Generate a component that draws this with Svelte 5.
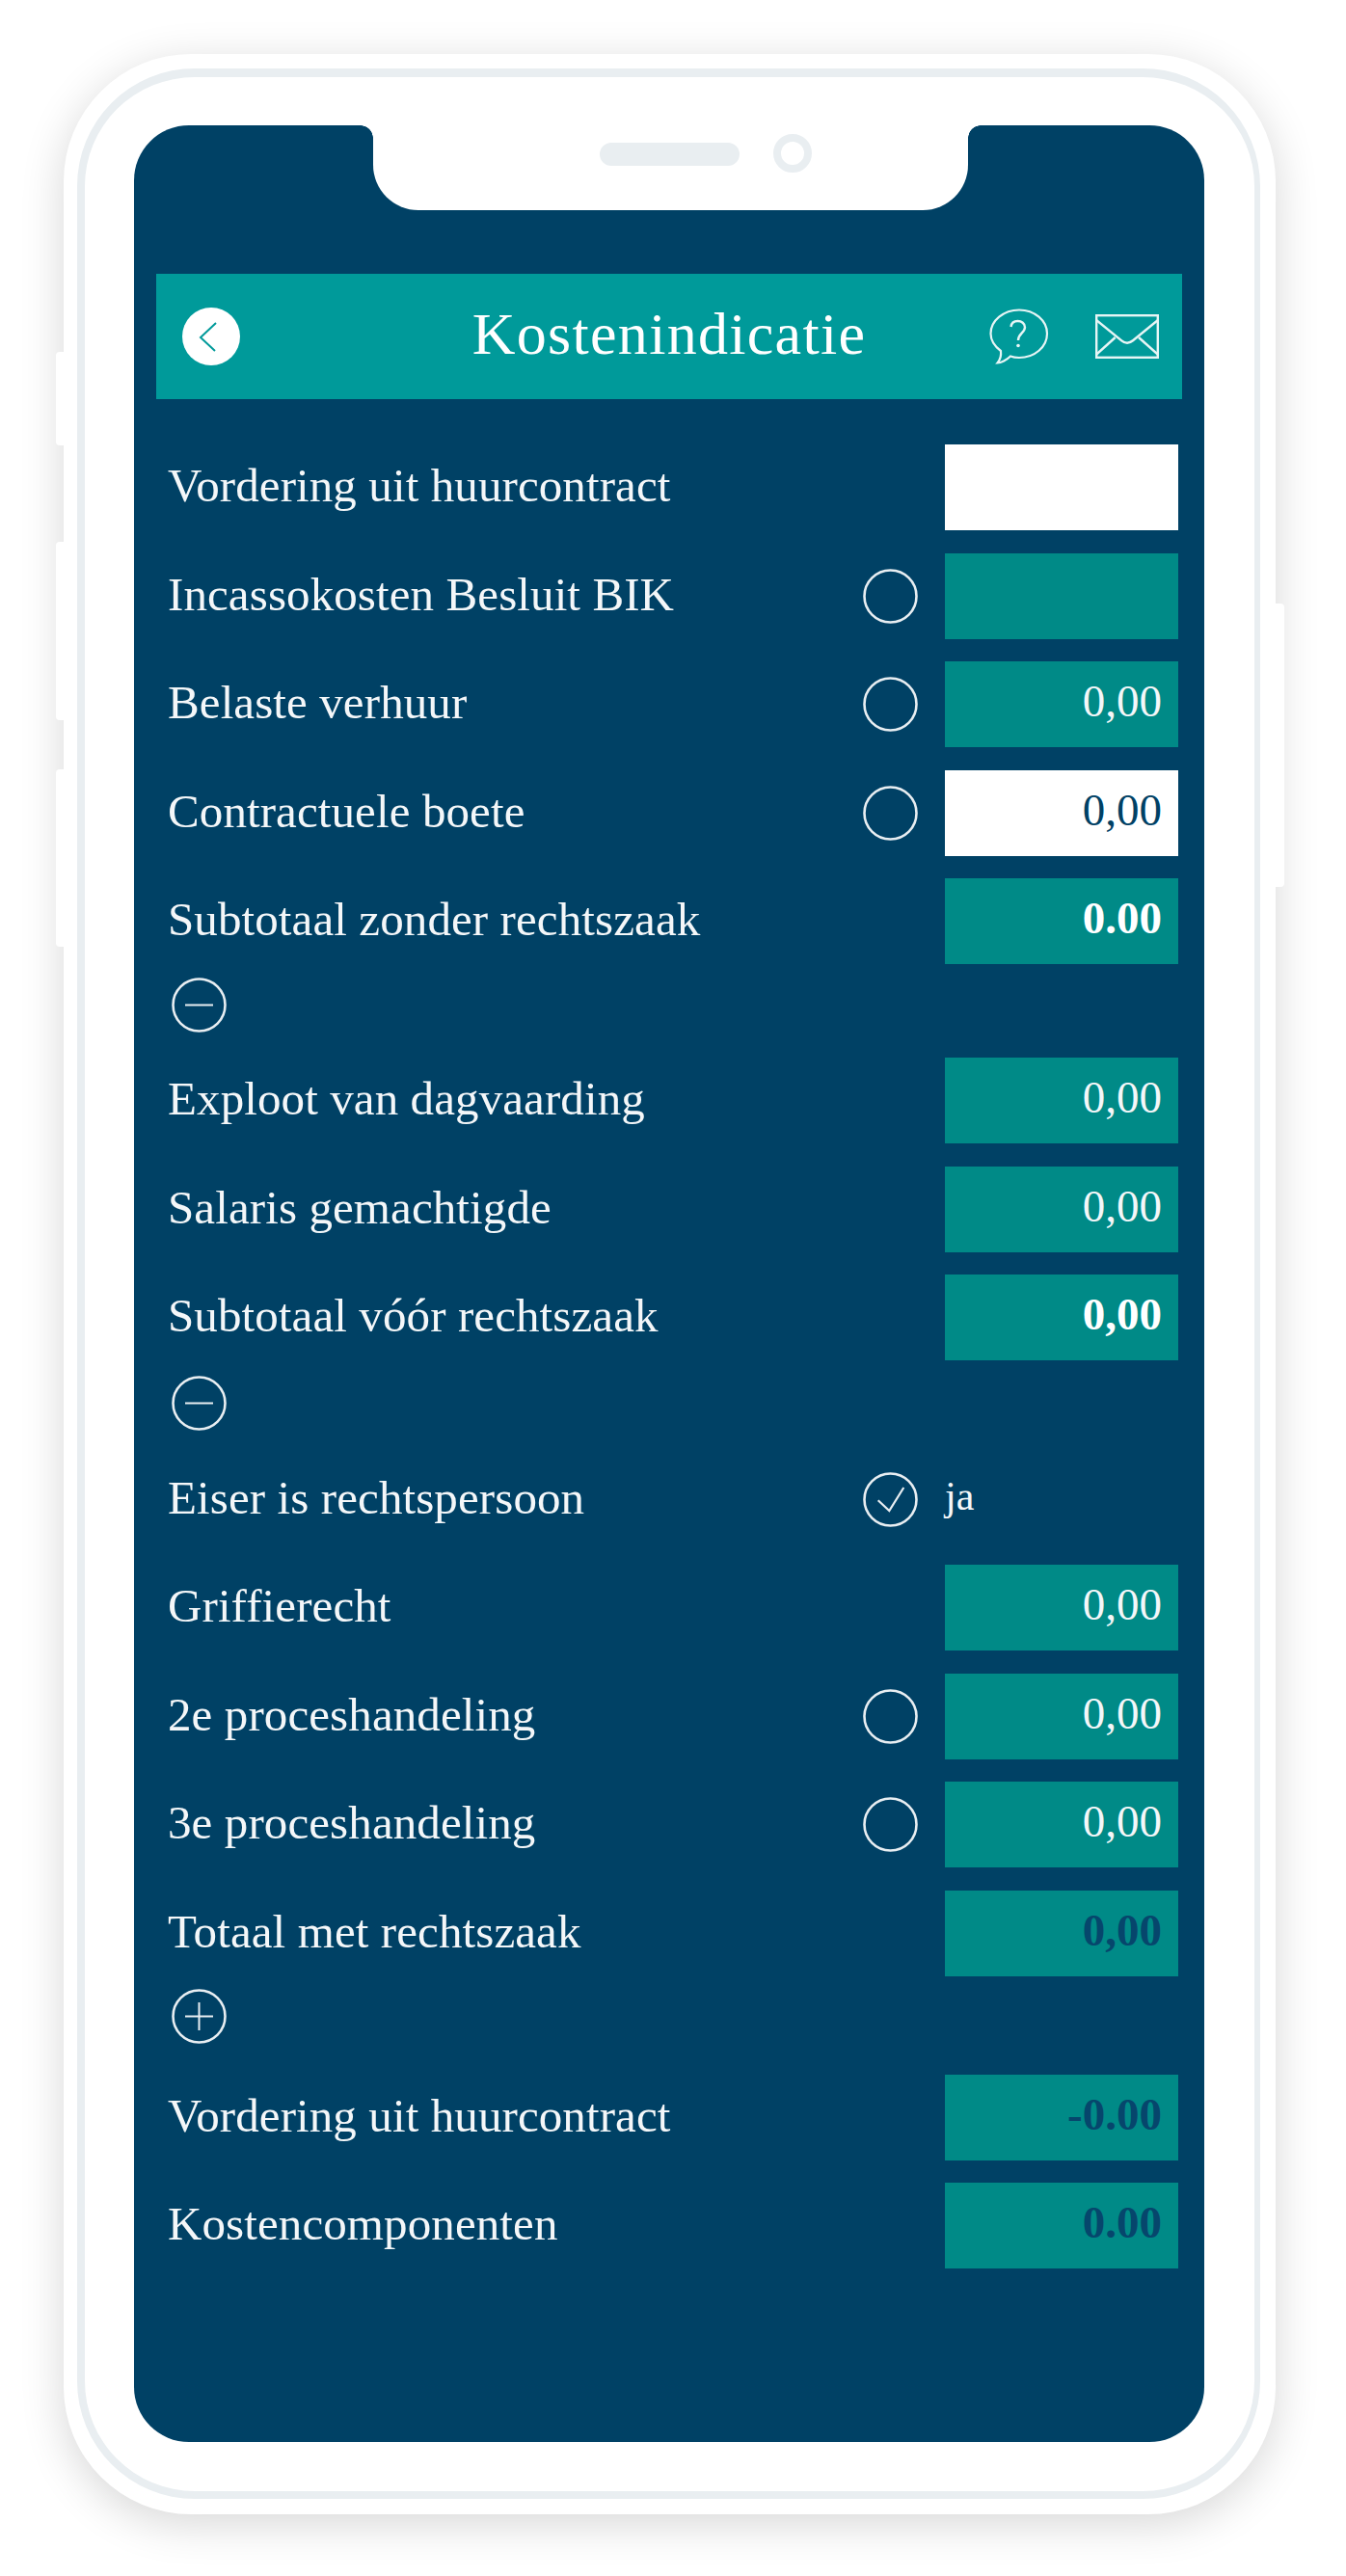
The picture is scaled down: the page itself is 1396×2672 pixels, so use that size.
<script lang="ts">
	type Row = {
		label: string;
		radio?: boolean;
		checked?: boolean;
		value?: string;
		kind?: 'plain' | 'input' | 'bold' | 'dark';
		note?: string;
	};

	const groups: { rows: Row[]; toggle?: 'minus' | 'plus'; cls?: string }[] = [
		{
			rows: [
				{ label: 'Vordering uit huurcontract', value: '', kind: 'input' },
				{ label: 'Incassokosten Besluit BIK', radio: true, value: '' },
				{ label: 'Belaste verhuur', radio: true, value: '0,00' },
				{ label: 'Contractuele boete', radio: true, value: '0,00', kind: 'input' },
				{ label: 'Subtotaal zonder rechtszaak', value: '0.00', kind: 'bold' }
			],
			toggle: 'minus'
		},
		{
			rows: [
				{ label: 'Exploot van dagvaarding', value: '0,00' },
				{ label: 'Salaris gemachtigde', value: '0,00' },
				{ label: 'Subtotaal vóór rechtszaak', value: '0,00', kind: 'bold' }
			],
			toggle: 'minus',
			cls: 'second'
		},
		{
			rows: [
				{ label: 'Eiser is rechtspersoon', radio: true, checked: true, note: 'ja' },
				{ label: 'Griffierecht', value: '0,00' },
				{ label: '2e proceshandeling', radio: true, value: '0,00' },
				{ label: '3e proceshandeling', radio: true, value: '0,00' },
				{ label: 'Totaal met rechtszaak', value: '0,00', kind: 'dark' }
			],
			toggle: 'plus',
			cls: 'third'
		},
		{
			rows: [
				{ label: 'Vordering uit huurcontract', value: '-0.00', kind: 'dark' },
				{ label: 'Kostencomponenten', value: '0.00', kind: 'dark' }
			]
		}
	];
</script>

<div class="page">
	<div class="phone">
		<span class="side side-a"></span>
		<span class="side side-b"></span>
		<span class="side side-c"></span>
		<span class="side side-d"></span>
		<div class="bezel">
			<div class="screen">
				<div class="notch">
					<span class="speaker"></span>
					<span class="camera"></span>
				</div>

				<header class="bar">
					<div class="bar-left">
						<svg class="back" viewBox="0 0 60 60" width="60" height="60">
							<circle cx="30" cy="30" r="30" fill="#fff" />
							<path d="M35 16 L19 31 L34 45" fill="none" stroke="#009a9a" stroke-width="2" />
						</svg>
					</div>
					<h1>Kostenindicatie</h1>
					<div class="bar-right">
						<svg viewBox="0 0 62 58" width="62" height="58" fill="none" stroke="#e6f5f5" stroke-width="2.2">
							<path d="M31 1.5 C47 1.5 60 12.5 60 26 C60 40 47 51 31 51 C27.5 51 24.5 50.5 22 49.5 C18 53.5 12 56.5 8.5 56.5 C11.5 53 12.5 48.5 12 44 C6 39.5 1.5 33 1.5 26 C1.5 12.5 15 1.5 31 1.5 Z" />
							<path d="M22.5 19 C23 15 26 13 29.5 13 C33.5 13 37 15.5 37 19.5 C37 25 30 26 30 33" stroke-width="2.4" />
							<circle cx="30" cy="38.5" r="1.8" fill="#e6f5f5" stroke="none" />
						</svg>
						<svg viewBox="0 0 66 46" width="66" height="46" fill="none" stroke="#e6f5f5" stroke-width="2.4">
							<rect x="1.2" y="1.2" width="63.6" height="43.6" />
							<path d="M0.7 5.7 L27.3 27.3 C31 30.5 35 30.5 39 27.3 L65.3 5.7" />
							<path d="M0.7 42 L20.7 24" />
							<path d="M65.3 42 L45 24" />
						</svg>
					</div>
				</header>

				<main class="list">
					{#each groups as g}
						{#each g.rows as r}
							<div class="row">
								<span class="label">{r.label}</span>
								<span class="slot">
									{#if r.radio}
										<svg viewBox="0 0 57 57" width="57" height="57" fill="none" stroke="#e8eef2" stroke-width="2.6">
											<circle cx="28.5" cy="28.5" r="27" />
											{#if r.checked}
												<path d="M15.7 29.3 L27.3 40 L42.3 16" stroke-width="2.2" />
											{/if}
										</svg>
									{/if}
								</span>
								{#if r.note}
									<span class="note">{r.note}</span>
								{:else}
									<span class="field {r.kind ?? 'plain'}">{r.value}</span>
								{/if}
							</div>
						{/each}
						{#if g.toggle}
							<div class="toggle {g.cls ?? ''}">
								<svg viewBox="0 0 57 57" width="57" height="57" fill="none" stroke="#e8eef2" stroke-width="2.6">
									<circle cx="28.5" cy="28.5" r="27" />
									<path d="M14 28.5 H43" stroke-width="2" />
									{#if g.toggle === 'plus'}
										<path d="M28.5 14 V43" stroke-width="2" />
									{/if}
								</svg>
							</div>
						{/if}
					{/each}
				</main>
			</div>
		</div>
	</div>
</div>

<style>
	:global(body) {
		background: #fff;
	}

	.page {
		width: 1396px;
		height: 2672px;
		padding: 56px 73px 0 66px;
		box-sizing: border-box;
		overflow: hidden;
		font-family: 'Liberation Serif', 'Times New Roman', serif;
	}

	.phone {
		position: relative;
		height: 2552px;
		padding: 15px 16px 16px 14px;
		box-sizing: border-box;
		background: #fff;
		border-radius: 132px;
		box-shadow: 0 10px 46px rgba(0, 0, 0, 0.16);
	}

	.side {
		position: absolute;
		width: 11px;
		background: #fff;
	}

	.side-a {
		left: -8px;
		top: 309px;
		height: 97px;
		border-radius: 4px 0 0 4px;
	}

	.side-b {
		left: -8px;
		top: 506px;
		height: 185px;
		border-radius: 4px 0 0 4px;
	}

	.side-c {
		left: -8px;
		top: 742px;
		height: 184px;
		border-radius: 4px 0 0 4px;
	}

	.side-d {
		right: -9px;
		top: 570px;
		height: 294px;
		border-radius: 0 4px 4px 0;
	}

	.bezel {
		height: 100%;
		box-sizing: border-box;
		padding: 50px 52px 51px 51px;
		background: #fff;
		border-style: solid;
		border-color: #e9eef1;
		border-width: 9px 6px 8px 8px;
		border-radius: 122px;
	}

	.screen {
		position: relative;
		height: 100%;
		padding: 154px 23px 0;
		box-sizing: border-box;
		background: #004165;
		border-radius: 57px;
		overflow: hidden;
	}

	.notch {
		position: absolute;
		top: 0;
		left: 248px;
		width: 617px;
		height: 88px;
		background: #fff;
		border-radius: 0 0 47px 47px;
	}

	.notch::before,
	.notch::after {
		content: '';
		position: absolute;
		top: 0;
		width: 13px;
		height: 13px;
	}

	.notch::before {
		left: -13px;
		background: radial-gradient(circle at 0 100%, transparent 12.5px, #fff 13px);
	}

	.notch::after {
		right: -13px;
		background: radial-gradient(circle at 100% 100%, transparent 12.5px, #fff 13px);
	}

	.speaker {
		position: absolute;
		left: 235px;
		top: 18px;
		width: 145px;
		height: 24px;
		border-radius: 12px;
		background: #e9eef1;
	}

	.camera {
		position: absolute;
		left: 415px;
		top: 9px;
		width: 24px;
		height: 24px;
		border: 8.5px solid #e9eef1;
		border-radius: 50%;
	}

	.bar {
		display: grid;
		grid-template-columns: 1fr auto 1fr;
		align-items: center;
		height: 130px;
		background: #009a9a;
		color: #fff;
	}

	.bar-left {
		display: flex;
		padding-left: 27px;
	}

	.bar h1 {
		margin: 0;
		padding-bottom: 6px;
		font-size: 62px;
		font-weight: 400;
		letter-spacing: 1.3px;
		line-height: 1;
	}

	.bar-right {
		display: flex;
		justify-content: flex-end;
		align-items: center;
		gap: 48px;
		padding-right: 24px;
	}

	.list {
		display: flex;
		flex-direction: column;
		margin-top: 47px;
		padding: 0 4px 0 12px;
	}

	.row {
		display: grid;
		grid-template-columns: 1fr 57px 242px;
		column-gap: 28.5px;
		align-items: center;
		height: 89px;
		margin-bottom: 23.5px;
		color: #f4f7f9;
	}

	.label {
		padding-bottom: 4px;
		font-size: 49px;
		letter-spacing: 0.1px;
		white-space: nowrap;
	}

	.slot {
		display: flex;
		height: 57px;
	}

	.note {
		padding-bottom: 6px;
		font-size: 42px;
	}

	.field {
		display: block;
		height: 89px;
		box-sizing: border-box;
		padding-right: 17px;
		background: #008a87;
		font-size: 47px;
		line-height: 83px;
		text-align: right;
	}

	.field.input {
		background: #fff;
		color: #004165;
	}

	.field.bold {
		font-weight: 700;
		color: #fff;
	}

	.field.dark {
		font-weight: 700;
		color: #06466c;
	}

	.toggle {
		display: flex;
		height: 57px;
		margin: -10px 0 26.5px 3.5px;
	}

	.toggle.second {
		margin-top: -8px;
		margin-bottom: 27px;
	}

	.toggle.third {
		margin-top: -10px;
		margin-bottom: 31.5px;
	}
</style>
